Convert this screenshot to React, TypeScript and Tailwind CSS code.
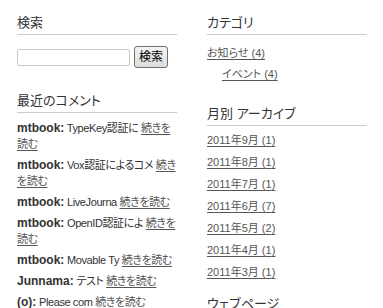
const font = "font-['Liberation_Sans','Noto_Sans_CJK_JP',sans-serif] [font-feature-settings:'palt']";

function Heading({ children }: { children: React.ReactNode }) {
  return (
    <h2 className="text-[13px] leading-[16px] pb-[3px] border-b border-[#cccccc] text-[#333333] font-normal">
      {children}
    </h2>
  );
}

export default function App() {
  const comments = [
    { author: 'mtbook', body: 'TypeKey認証に' },
    { author: 'mtbook', body: 'Vox認証によるコメ' },
    { author: 'mtbook', body: 'LiveJourna' },
    { author: 'mtbook', body: 'OpenID認証によ' },
    { author: 'mtbook', body: 'Movable Ty' },
    { author: 'Junnama', body: 'テスト' },
    { author: '(o)', body: 'Please com' },
  ];

  const months = [
    { label: '2011年9月', count: 1 },
    { label: '2011年8月', count: 1 },
    { label: '2011年7月', count: 1 },
    { label: '2011年6月', count: 7 },
    { label: '2011年5月', count: 2 },
    { label: '2011年4月', count: 1 },
    { label: '2011年3月', count: 1 },
  ];

  return (
    <div className={`${font} bg-white text-[#333333] w-[383px] h-[308px] overflow-hidden pt-[15px] pl-[17px] flex gap-[30px]`}>
      {/* left column */}
      <div className="w-[160px] shrink-0">
        <div className="mb-[25px]">
          <Heading>検索</Heading>
          <div className="mt-[11px] flex items-center gap-[4px]">
            <input
              type="text"
              className="w-[113px] h-[17px] border border-[#c9c9c9] rounded-[2px] bg-white outline-none"
            />
            <button className="h-[22px] w-[34px] border border-[#707070] rounded-[3px] bg-gradient-to-b from-[#f4f4f4] to-[#dcdcdc] text-[12px] leading-none text-black">
              検索
            </button>
          </div>
        </div>

        <div>
          <Heading>最近のコメント</Heading>
          <ul className="mt-[7px] text-[11px] leading-[16px] tracking-[-0.4px]">
            {comments.map((c, i) => (
              <li key={i} className="mb-[5px]">
                <span className="font-bold text-[12px] tracking-normal">{c.author}:</span> {c.body}{' '}
                <a href="#" className="text-[#555555] underline underline-offset-2">
                  続きを読む
                </a>
              </li>
            ))}
          </ul>
        </div>
      </div>

      {/* right column */}
      <div className="w-[160px] shrink-0">
        <div className="mb-[24px]">
          <Heading>カテゴリ</Heading>
          <ul className="mt-[10px] text-[11px] leading-[16px]">
            <li className="mb-[5px]">
              <a href="#" className="text-[#555555] underline underline-offset-2">
                お知らせ (4)
              </a>
              <ul className="mt-[5px] pl-[15px]">
                <li>
                  <a href="#" className="text-[#555555] underline underline-offset-2">
                    イベント (4)
                  </a>
                </li>
              </ul>
            </li>
          </ul>
        </div>

        <div className="mb-[16px]">
          <Heading>月別 アーカイブ</Heading>
          <ul className="mt-[6px] text-[11px] leading-[16px]">
            {months.map((m) => (
              <li key={m.label} className="mb-[6px]">
                <a href="#" className="text-[#555555] underline underline-offset-2">
                  {m.label} ({m.count})
                </a>
              </li>
            ))}
          </ul>
        </div>

        <div>
          <Heading>ウェブページ</Heading>
        </div>
      </div>
    </div>
  );
}
